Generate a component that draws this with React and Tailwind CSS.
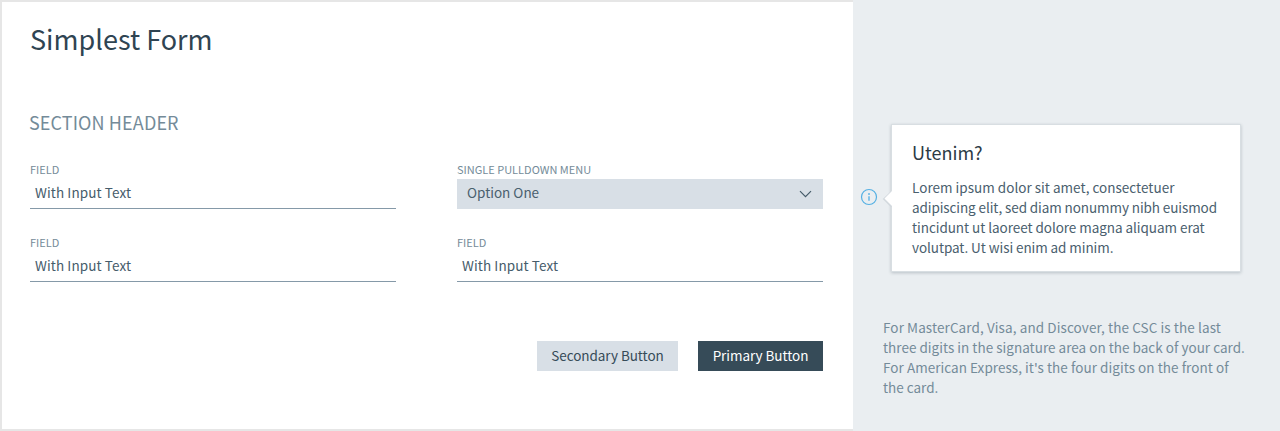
function Label({ children }) {
  return (
    <div className="h-4 text-[11px] leading-[15px] whitespace-nowrap text-[#748b99]">{children}</div>
  );
}

function Field({ label, value }) {
  return (
    <div className="w-[366px]">
      <Label>{label}</Label>
      <div className="h-[31px] border-b border-[#8599a8] pl-[5px] text-[13.5px] leading-[28px] tracking-[0.1px] text-[#465c6b]">
        {value}
      </div>
    </div>
  );
}

function Select({ label, value }) {
  return (
    <div className="w-[366px]">
      <Label>{label}</Label>
      <div className="mt-px flex h-[30px] items-center justify-between bg-[#d8dfe6] pr-[11px] pl-[10px] text-[13.5px] leading-[28px] text-[#4a606e]">
        <span className="-mt-[4px]">{value}</span>
        <svg className="h-[8px] w-[13px]" viewBox="0 0 13 8" fill="none" stroke="#455b69" strokeWidth="1.2">
          <path d="M1 1.2 L6.5 6.7 L12 1.2" />
        </svg>
      </div>
    </div>
  );
}

function InfoIcon() {
  return (
    <svg className="h-[18px] w-[18px]" viewBox="0 0 18 18" fill="none">
      <circle cx="9" cy="9" r="7.5" stroke="#55b0e3" strokeWidth="1.2" />
      <path d="M9 5v2M9 8.3v4.4" stroke="#6dbbe8" strokeWidth="1.6" />
    </svg>
  );
}

export default function App() {
  return (
    <div className="flex h-[431px] w-[1280px] overflow-hidden bg-[#eaeef1] font-['Noto_Sans_CJK_SC','Noto_Sans',sans-serif]">
      <main className="h-full w-[853px] border-y-2 border-l-2 border-[#e6e6e6] bg-white pl-7">
        <h1 className="mt-[17px] h-10 text-[27px] leading-10 whitespace-nowrap text-[#2f4452]">Simplest Form</h1>
        <h2 className="mt-[49px] -ml-px h-7 text-[18px] leading-7 tracking-[0.12px] whitespace-nowrap text-[#748b99]">SECTION HEADER</h2>
        <div className="mt-[26px] grid w-[793px] grid-cols-[366px_366px] justify-between gap-y-[26px]">
          <Field label="FIELD" value="With Input Text" />
          <Select label="SINGLE PULLDOWN MENU" value="Option One" />
          <Field label="FIELD" value="With Input Text" />
          <Field label="FIELD" value="With Input Text" />
        </div>
        <div className="mt-[59px] flex w-[793px] justify-end gap-5 text-[13.5px] leading-[28px]">
          <button className="h-[30px] w-[141px] bg-[#d8dfe6] pb-[2px] tracking-[-0.05px] whitespace-nowrap text-[#364b58]">Secondary Button</button>
          <button className="h-[30px] w-[125px] bg-[#364b58] pb-[2px] tracking-[-0.05px] whitespace-nowrap text-white">Primary Button</button>
        </div>
      </main>
      <aside className="flex-1 text-[13.5px] leading-5 whitespace-nowrap">
        <div className="mt-[124px] flex items-start pl-[7px]">
          <div className="mt-16">
            <InfoIcon />
          </div>
          <section className="relative ml-[13px] h-[148px] w-[350px] border border-[#d8dee2] bg-white pt-[12px] pl-5 shadow-[0_1px_3px_rgba(60,80,95,0.28)]">
            <svg className="absolute top-[64px] -left-[10px] h-[20px] w-[11px]" viewBox="0 0 11 20">
              <path d="M9.5 3 L2 10 L9.5 17.5" fill="none" stroke="#d3d9de" strokeWidth="1.8" />
              <path d="M11 2 H10 L2.5 9.5 L10 17 H11Z" fill="white" />
            </svg>
            <h3 className="h-[30px] text-[18px] leading-[30px] text-[#2c3a44]">Utenim?</h3>
            <p className="mt-[10px] text-[#4a606e]">
              <span className="tracking-[0.02px]">Lorem ipsum dolor sit amet, consectetuer</span><br />
              <span className="tracking-[-0.09px]">adipiscing elit, sed diam nonummy nibh euismod</span><br />
              <span className="tracking-[-0.05px]">tincidunt ut laoreet dolore magna aliquam erat</span><br />
              <span className="tracking-[-0.07px]">volutpat. Ut wisi enim ad minim.</span>
            </p>
          </section>
        </div>
        <p className="mt-[45px] pl-[30px] text-[#748b99]">
          <span className="tracking-[0.1px]">For MasterCard, Visa, and Discover, the CSC is the last</span><br />
          <span className="tracking-[0.02px]">three digits in the signature area on the back of your card.</span><br />
          <span className="tracking-[0.05px]">For American Express, it's the four digits on the front of</span><br />
          <span>the card.</span>
        </p>
      </aside>
    </div>
  );
}
